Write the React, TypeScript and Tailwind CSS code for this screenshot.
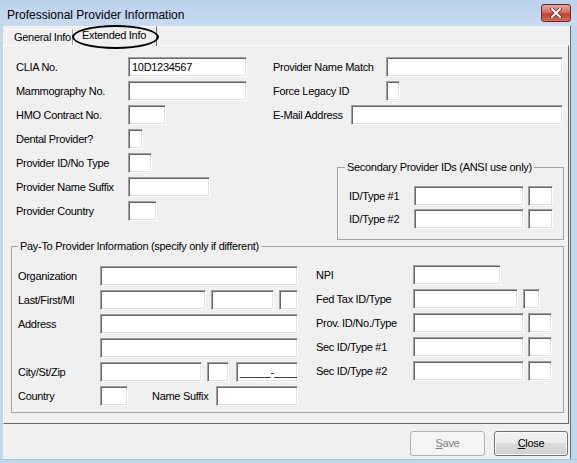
import React from "react";

const sunken =
  "h-[20px] shrink-0 bg-white border border-t-[#a0a0a0] border-l-[#a0a0a0] border-r-white border-b-white shadow-[inset_1px_1px_0_#696969,inset_-1px_-1px_0_#e3e3e3]";

function Box({ w, children }: { w: string; children?: React.ReactNode }) {
  return (
    <div className={`${sunken} ${w} flex items-center pl-[3px] overflow-hidden whitespace-nowrap`}>
      {children}
    </div>
  );
}

function Row({ label, lw, children }: { label: string; lw: string; children?: React.ReactNode }) {
  return (
    <div className="flex h-[20px] items-center">
      <span className={`${lw} shrink-0 whitespace-nowrap`}>{label}</span>
      {children}
    </div>
  );
}

function WinButton({ children, disabled }: { children: React.ReactNode; disabled?: boolean }) {
  return (
    <button
      type="button"
      className={
        disabled
          ? "h-[25px] w-[75px] rounded-[3px] border border-[#adb2b5] bg-[#f4f4f4] text-[#838383]"
          : "h-[25px] w-[74px] rounded-[3px] border border-[#707070] bg-[linear-gradient(#f2f2f2,#ebebeb_50%,#dddddd_50%,#cfcfcf)] text-black shadow-[inset_0_0_0_1px_#fcfcfc]"
      }
    >
      {children}
    </button>
  );
}

export default function App() {
  return (
    <div className="relative flex h-[463px] w-[577px] flex-col overflow-hidden bg-[#c2d6ec] font-['Liberation_Sans',Arial,sans-serif] text-[11px] tracking-[-0.3px] text-black">
      {/* title bar */}
      <div className="flex h-[26px] shrink-0 items-start bg-[linear-gradient(#bcd2eb,#c7dbf1)] pl-[7px] pr-[6px]">
        <span className="mt-[6px] text-[12px] tracking-normal">Professional Provider Information</span>
        <div className="ml-auto mt-[4px] flex h-[18px] w-[30px] items-center justify-center rounded-[3px] border border-[#6e2a22] bg-[linear-gradient(#e8a597,#d7705f_45%,#c4402d_55%,#d0705e)]">
          <svg width="12" height="10" viewBox="0 0 12 10">
            <path d="M2 1 L10 9 M10 1 L2 9" stroke="#5a2a26" strokeWidth="3.4" strokeLinecap="square" />
            <path d="M2 1 L10 9 M10 1 L2 9" stroke="#ffffff" strokeWidth="2" strokeLinecap="square" />
          </svg>
        </div>
      </div>

      {/* client area */}
      <div className="ml-[3px] mr-[6px] flex h-[433px] flex-col border-r border-r-[#5a6a80] bg-[#f0f0f0]">
        {/* tabs */}
        <div className="flex h-[19px] shrink-0 items-end pl-[3px]">
          <div className="flex h-[16px] w-[67px] items-center border-l border-t border-r border-l-white border-t-white border-r-[#a0a0a0] pl-[7px]">
            General Info
          </div>
          <div className="relative -mb-px flex h-[20px] w-[84px] items-center border-l border-t border-r border-l-white border-t-white border-r-[#696969] bg-[#f0f0f0] pl-[8px] pb-[2px]">
            Extended Info
            <div className="absolute left-[-2px] top-[-2px] h-[24px] w-[87px] rounded-[50%] border-2 border-black" />
          </div>
        </div>

        {/* tab panel */}
        <div className="mr-[1px] h-[379px] shrink-0 border border-l-white border-t-white border-r-[#696969] border-b-[#696969] pt-[11px]">
          {/* top section */}
          <div className="flex pl-[12px]">
            <div className="flex w-[257px] flex-col gap-[4px]">
              <Row label="CLIA No." lw="w-[112px]">
                <Box w="w-[119px]">10D1234567</Box>
              </Row>
              <Row label="Mammography No." lw="w-[112px]">
                <Box w="w-[119px]" />
              </Row>
              <Row label="HMO Contract No." lw="w-[112px]">
                <Box w="w-[38px]" />
              </Row>
              <Row label="Dental Provider?" lw="w-[112px]">
                <Box w="w-[15px]" />
              </Row>
              <Row label="Provider ID/No Type" lw="w-[112px]">
                <Box w="w-[24px]" />
              </Row>
              <Row label="Provider Name Suffix" lw="w-[112px]">
                <Box w="w-[82px]" />
              </Row>
              <Row label="Provider Country" lw="w-[112px]">
                <Box w="w-[29px]" />
              </Row>
            </div>

            <div className="flex w-[291px] flex-col">
              <div className="flex flex-col gap-[4px]">
                <Row label="Provider Name Match" lw="w-[113px]">
                  <Box w="w-[177px]" />
                </Row>
                <Row label="Force Legacy ID" lw="w-[113px]">
                  <Box w="w-[14px]" />
                </Row>
                <Row label="E-Mail Address" lw="w-[78px]">
                  <Box w="w-[212px]" />
                </Row>
              </div>

              <fieldset className="ml-[64px] mt-[35px] h-[80px] w-[227px] border border-[#a5a5a5]">
                <legend className="ml-[7px] px-[2px] leading-[14px]">Secondary Provider IDs (ANSI use only)</legend>
                <div className="flex flex-col gap-[3px] pl-[11px] pt-[12px]">
                  <Row label="ID/Type #1" lw="w-[65px]">
                    <Box w="w-[110px]" />
                    <div className="w-[4px]" />
                    <Box w="w-[25px]" />
                  </Row>
                  <Row label="ID/Type #2" lw="w-[65px]">
                    <Box w="w-[110px]" />
                    <div className="w-[4px]" />
                    <Box w="w-[25px]" />
                  </Row>
                </div>
              </fieldset>
            </div>
          </div>

          {/* pay-to */}
          <fieldset className="ml-[7px] mt-[-1px] h-[174px] w-[553px] border border-[#a5a5a5]">
            <legend className="ml-[6px] px-[2px] leading-[14px]">Pay-To Provider Information (specify only if different)</legend>
            <div className="flex pl-[6px] pt-[13px]">
              <div className="flex w-[280px] flex-col gap-[4px]">
                <Row label="Organization" lw="w-[82px]">
                  <Box w="w-[198px]" />
                </Row>
                <Row label="Last/First/MI" lw="w-[82px]">
                  <Box w="w-[106px]" />
                  <div className="w-[5px]" />
                  <Box w="w-[63px]" />
                  <div className="w-[5px]" />
                  <Box w="w-[19px]" />
                </Row>
                <Row label="Address" lw="w-[82px]">
                  <Box w="w-[198px]" />
                </Row>
                <Row label="" lw="w-[82px]">
                  <Box w="w-[198px]" />
                </Row>
                <Row label="City/St/Zip" lw="w-[82px]">
                  <Box w="w-[102px]" />
                  <div className="w-[5px]" />
                  <Box w="w-[22px]" />
                  <div className="w-[7px]" />
                  <Box w="w-[62px]">
                    <span className="tracking-normal">_____-____</span>
                  </Box>
                </Row>
                <Row label="Country" lw="w-[82px]">
                  <Box w="w-[28px]" />
                  <span className="w-[64px] shrink-0 pl-[24px] box-content whitespace-nowrap">Name Suffix</span>
                  <Box w="w-[82px]" />
                </Row>
              </div>

              <div className="-mt-px flex flex-col gap-[4px] pl-[18px]">
                <Row label="NPI" lw="w-[97px]">
                  <Box w="w-[88px]" />
                </Row>
                <Row label="Fed Tax ID/Type" lw="w-[97px]">
                  <Box w="w-[105px]" />
                  <div className="w-[5px]" />
                  <Box w="w-[17px]" />
                </Row>
                <Row label="Prov. ID/No./Type" lw="w-[97px]">
                  <Box w="w-[111px]" />
                  <div className="w-[4px]" />
                  <Box w="w-[24px]" />
                </Row>
                <Row label="Sec ID/Type #1" lw="w-[97px]">
                  <Box w="w-[111px]" />
                  <div className="w-[4px]" />
                  <Box w="w-[24px]" />
                </Row>
                <Row label="Sec ID/Type #2" lw="w-[97px]">
                  <Box w="w-[111px]" />
                  <div className="w-[4px]" />
                  <Box w="w-[24px]" />
                </Row>
              </div>
            </div>
          </fieldset>
        </div>

        {/* buttons */}
        <div className="mr-[2px] mt-[7px] flex justify-end gap-[9px]">
          <WinButton disabled>
            <span className="underline">S</span>ave
          </WinButton>
          <WinButton>
            <span className="underline">C</span>lose
          </WinButton>
        </div>
      </div>
      <div className="h-[1px] bg-[#8fd0e8]" />
    </div>
  );
}
